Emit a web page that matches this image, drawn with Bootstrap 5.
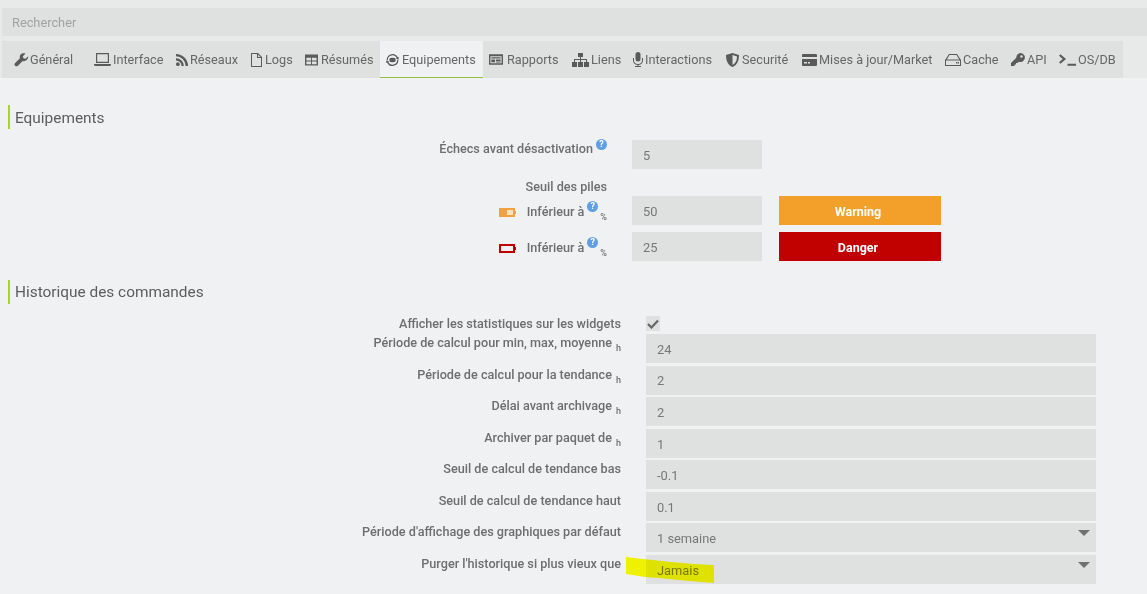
<!doctype html>
<html lang="fr"><head><meta charset="utf-8"><title>Configuration</title>
<link href="https://cdn.jsdelivr.net/npm/bootstrap@5.3.0/dist/css/bootstrap.min.css" rel="stylesheet">
<style>
html,body{height:100%;overflow:hidden}
body{background:#eff1f3;font-family:Roboto,"Liberation Sans",sans-serif;font-size:13px;color:#6b6b6b;position:relative}
.top-zone{background:#e8e9e9;padding:8px 0 0 2px;height:78px}
.search-bar{height:28px;background:#dfe1e0;color:#a2a2a2;font-size:12.8px;line-height:29px;padding-left:10px}
.tab-strip{margin-top:5px;height:37px;width:1121px;background:#dfe1e0;display:flex;padding-left:3px}
.tab-item{display:flex;align-items:center;white-space:nowrap;color:#666;height:37px;padding-left:6px;font-size:12.7px}
.tab-item svg{flex:none;fill:#5a5a5a}
.tab-on{background:#eff1f3;border-bottom:1px solid #94c13d;padding-top:1px}
.w1{width:83px;padding-left:9px}.w2{width:82px}.w3{width:75px}.w4{width:54px}.w5{width:81px}.w6{width:103px}.w7{width:83px}.w8{width:61px}.w9{width:93px}.w10{width:76px}.w11{width:143px}.w12{width:66px}.w13{width:48px}.w14{width:70px}
.g1{margin-right:1px}.g2{margin-right:2px}.g3{margin-right:3px}.g4{margin-right:4px}
.sect-title{margin:27px 0 0 8px;height:24px;border-left:2px solid #a6d42c;padding-left:5px;font-size:15.4px;line-height:25px;color:#5d5d5d}
.sect-one{line-height:26px}
.sect-two{margin-top:19px}
.lab{font-weight:500;color:#6e6e6e;text-align:right;white-space:nowrap;font-size:12.65px;line-height:16px}
.fld{background:#dfe1e0;color:#777;padding:2px 0 0 11px;display:flex;align-items:center;position:relative;font-size:12.85px}
.row-a{display:flex;height:29px}
.row-a .lab{width:607px;margin-top:-1px}
.row-a .fld{width:130px;height:29px;margin-left:25px;padding-top:3px}
.row-a .unit{margin-left:2px}
.first-a{margin-top:11px}
.gap-a{margin-top:7px}
.row-a.piles{height:27px}
.row-a .piles-lab{margin-top:0;padding-top:10px}
.row-a .inf-lab{margin-top:0;padding-top:5px}
.sw{width:162px;height:29px;margin-left:17px;color:#fff;font-weight:700;font-size:12.5px;display:flex;align-items:center;justify-content:center;padding:4px 4px 0 0}
.sw-w{background:#f2a02a}.sw-d{background:#c10000}
.help{display:inline-block;width:11px;height:11px;border-radius:50%;background:#5f9fe6;color:#fff;font-size:9px;line-height:11px;font-weight:700;text-align:center;vertical-align:6px;margin-left:3px}
.inf-lab .help{vertical-align:7px}
.unit{font-size:9px;vertical-align:-4px;margin-left:4px}
.batt{display:inline-block;margin-right:11px;vertical-align:-1px}
.row-b{display:flex;height:31.57px}
.row-b .lab{width:621px;padding-top:1px}
.row-b .fld{width:450px;height:29px;margin-left:25px}
.row-tick{margin-top:13px;height:17px}
.row-b .tick-lab{padding-top:0;margin-top:-1px}
.arrow{position:absolute;right:6px;top:7px;width:0;height:0;border-left:6px solid transparent;border-right:6px solid transparent;border-top:6px solid #707070}
.tick{width:14px;height:15px;background:#dfe1e0;margin-left:25px;margin-top:-1px;display:flex;align-items:center;justify-content:center}
.mark-ink{position:absolute;left:626px;top:557px;mix-blend-mode:multiply}
</style></head><body>
<div class="top-zone">
 <div class="search-bar">Rechercher</div>
 <div class="tab-strip">
  <div class="tab-item w1"><svg class="g1" width="15" height="14" viewBox="0 0 16 16"><path d="M15.600 3.600l-3 3-2.400-.6-.6-2.400 3-3C10.600-.2 8.400.2 7.200 1.500 6 2.700 5.700 4.400 6.200 5.900L.7 11.400c-.9.9-.9 2.300 0 3.200s2.300.9 3.200 0l5.500-5.500c1.500.5 3.200.2 4.500-1 1.300-1.300 1.700-3 1.700-4.500z"/></svg>Général</div>
  <div class="tab-item w2"><svg class="g2" width="17" height="13" viewBox="0 0 17 13"><path d="M2 0h13v10H2zM3.200 1.200v7.600h10.600V1.200zM0 11h17v1l-1 1H1l-1-1z" fill-rule="evenodd"/></svg>Interface</div>
  <div class="tab-item w3"><svg class="g2" width="12" height="12" viewBox="0 0 13 13"><circle cx="2" cy="11" r="2"/><path d="M0 4.500v2.500a6 6 0 0 1 6 6h2.500A8.500 8.500 0 0 0 0 4.500zM0 0v2.500A10.500 10.500 0 0 1 10.500 13H13A13 13 0 0 0 0 0z"/></svg>Réseaux</div>
  <div class="tab-item w4"><svg class="g3" width="11" height="14" viewBox="0 0 11 14"><path d="M0 0h7l4 4v10H0zM1 1v12h9V5H6V1zM7 1.500V4h2.500z" fill-rule="evenodd"/></svg>Logs</div>
  <div class="tab-item w5"><svg class="g3" width="13" height="12" viewBox="0 0 14 12"><path d="M0 0h14v12H0zM1.500 3.500v3h5v-3zM7.500 3.500v3h5v-3zM1.500 7.500v3h5v-3zM7.500 7.500v3h5v-3z" fill-rule="evenodd"/></svg>Résumés</div>
  <div class="tab-item w6 tab-on"><svg class="g3" width="13" height="14" viewBox="0 0 14 14"><path d="M7 .6a6.300 6.300 0 0 1 5.800 3.800l1.200-.6-.6 3-2.800-1.200 1-.5A5 5 0 0 0 2 7H.7A6.300 6.300 0 0 1 7 .6zM13.300 7A6.300 6.300 0 0 1 1.200 9.600L0 10.200l.6-3 2.800 1.200-1 .5A5 5 0 0 0 12 7z"/><rect x="3.500" y="4.500" width="7" height="5" rx="2.500"/></svg>Equipements</div>
  <div class="tab-item w7"><svg class="g4" width="14" height="11" viewBox="0 0 15 11"><path d="M0 0h15v11H0zM1.500 2v7.500h12V2zM2.500 3h10v1.500h-10zM2.500 5.500h4v3h-4zM7.500 5.500h5V7h-5zM7.500 7.600h5v1h-5z" fill-rule="evenodd"/></svg>Rapports</div>
  <div class="tab-item w8"><svg class="g2" width="17" height="14" viewBox="0 0 17 14"><path d="M6 0h5v4H9v2h6v3h2v5h-5V9h2V7H9v2h2v5H6V9h2V7H3v2h2v5H0V9h2V6h6V4H6z"/></svg>Liens</div>
  <div class="tab-item w9"><svg class="g2" width="10" height="15" viewBox="0 0 10 15"><rect x="2.500" y="0" width="5" height="9.500" rx="2.500"/><path d="M1 6v2a4 4 0 0 0 8 0V6h1v2a5 5 0 0 1-4.500 5v1H8v1H2v-1h2.500v-1A5 5 0 0 1 0 8V6z"/></svg>Interactions</div>
  <div class="tab-item w10"><svg class="g3" width="13" height="14" viewBox="0 0 13 14"><path d="M6.500 0L13 2c0 6-2 10-6.500 12C2 12 0 8 0 2zM6.500 2v10C9.500 10.500 11 7.500 11 3.500z" fill-rule="evenodd"/></svg>Securité</div>
  <div class="tab-item w11"><svg class="g2" width="15" height="12" viewBox="0 0 15 12"><path d="M1 0h13a1 1 0 0 1 1 1v2H0V1a1 1 0 0 1 1-1zM0 5h15v6a1 1 0 0 1-1 1H1a1 1 0 0 1-1-1zM2 8v1.500h3V8zM6 8v1.500h2V8z" fill-rule="evenodd"/></svg>Mises à jour/Market</div>
  <div class="tab-item w12"><svg class="g2" width="16" height="12" viewBox="0 0 16 12"><path d="M4 0h8l4 6v6H0V6zM4.500 1L1.800 5.500h12.400L11.500 1zM1 6.500V11h14V6.500zM11 8h1.500v1.500H11zM13 8h1v1.500h-1z" fill-rule="evenodd"/></svg>Cache</div>
  <div class="tab-item w13"><svg class="g2" width="14" height="14" viewBox="0 0 14 14"><path d="M9.500 0A4.500 4.500 0 1 1 7.800 8.700L6.500 10H5v1.500H3.500V13H0v-3l5.300-5.300A4.500 4.500 0 0 1 9.500 0zm1 2.200a1.300 1.300 0 1 0 0 2.600 1.300 1.300 0 0 0 0-2.600z" fill-rule="evenodd"/></svg>API</div>
  <div class="tab-item w14"><svg class="g1" width="18" height="12" viewBox="0 0 19 12"><path d="M1.500 0l6 5-6 5L0 8.500 4 5 0 1.500zM9 10h9v2H9z"/></svg>OS/DB</div>
 </div>
</div>

<div class="sect-title sect-one">Equipements</div>
<div class="row-a first-a"><div class="lab">Échecs avant désactivation<span class="help">?</span></div><div class="fld">5</div></div>
<div class="row-a piles"><div class="lab piles-lab">Seuil des piles</div></div>
<div class="row-a"><div class="lab inf-lab"><svg class="batt" width="17" height="9" viewBox="0 0 17 9"><rect x="1" y="1" width="14" height="7" fill="#f8e2bd" stroke="#f2a040" stroke-width="2"/><rect x="2" y="2" width="6" height="5" fill="#f2a040"/><rect x="15" y="3" width="2" height="3" fill="#f2a040"/></svg>Inférieur à<span class="help">?</span><span class="unit">%</span></div><div class="fld">50</div><div class="sw sw-w">Warning</div></div>
<div class="row-a gap-a"><div class="lab inf-lab"><svg class="batt" width="17" height="9" viewBox="0 0 17 9"><rect x="1" y="1" width="14" height="7" fill="#f3eeee" stroke="#c10000" stroke-width="2"/><rect x="15" y="3" width="2" height="3" fill="#c10000"/></svg>Inférieur à<span class="help">?</span><span class="unit">%</span></div><div class="fld">25</div><div class="sw sw-d">Danger</div></div>

<div class="sect-title sect-two">Historique des commandes</div>
<div class="row-b row-tick"><div class="lab tick-lab">Afficher les statistiques sur les widgets</div><div class="tick"><svg width="12" height="10" viewBox="0 0 12 10"><path d="M1 5l3.500 3.500L11 1.500" fill="none" stroke="#666" stroke-width="2.200"/></svg></div></div>
<div class="row-b"><div class="lab">Période de calcul pour min, max, moyenne<span class="unit">h</span></div><div class="fld">24</div></div>
<div class="row-b"><div class="lab">Période de calcul pour la tendance<span class="unit">h</span></div><div class="fld">2</div></div>
<div class="row-b"><div class="lab">Délai avant archivage<span class="unit">h</span></div><div class="fld">2</div></div>
<div class="row-b"><div class="lab">Archiver par paquet de<span class="unit">h</span></div><div class="fld">1</div></div>
<div class="row-b"><div class="lab">Seuil de calcul de tendance bas</div><div class="fld">-0.1</div></div>
<div class="row-b"><div class="lab">Seuil de calcul de tendance haut</div><div class="fld">0.1</div></div>
<div class="row-b"><div class="lab">Période d'affichage des graphiques par défaut</div><div class="fld">1 semaine<i class="arrow"></i></div></div>
<div class="row-b"><div class="lab">Purger l'historique si plus vieux que</div><div class="fld">Jamais<i class="arrow"></i></div></div>
<svg class="mark-ink" width="89" height="27" viewBox="0 0 89 27"><path d="M0 0L17 2 45 5 68 7 88 8V26L75 25 52 23 33 21 19 20 0 17z" fill="#ffff00"/></svg>
<script src="https://cdn.jsdelivr.net/npm/bootstrap@5.3.0/dist/js/bootstrap.bundle.min.js"></script>
</body></html>
